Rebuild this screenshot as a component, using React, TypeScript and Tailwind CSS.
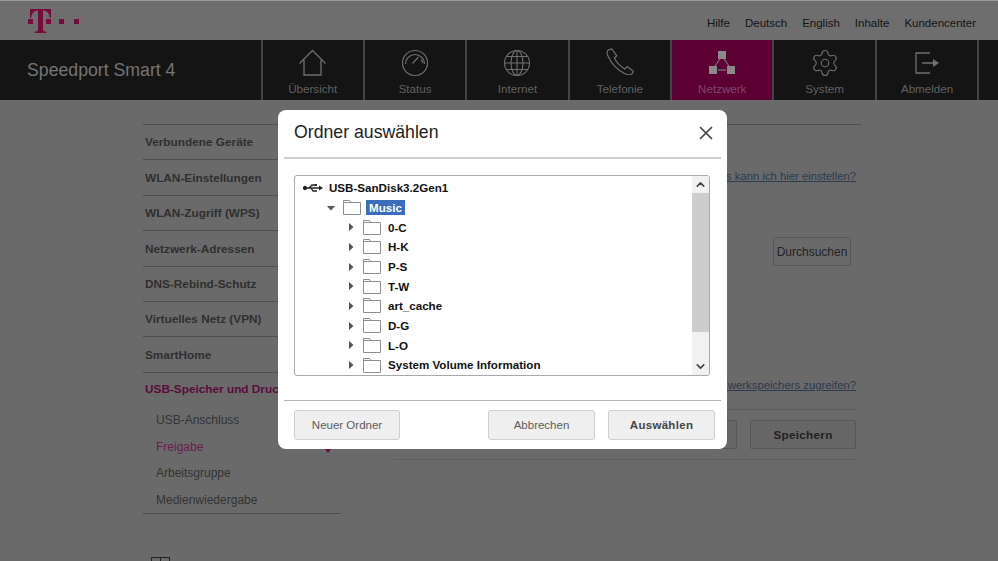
import { ChevronDown, ChevronUp, Settings, X } from 'lucide-react'

const topLinks = ['Hilfe', 'Deutsch', 'English', 'Inhalte', 'Kundencenter']

const sideItems = [
  'Verbundene Geräte',
  'WLAN-Einstellungen',
  'WLAN-Zugriff (WPS)',
  'Netzwerk-Adressen',
  'DNS-Rebind-Schutz',
  'Virtuelles Netz (VPN)',
  'SmartHome',
]

const subFolders = ['0-C', 'H-K', 'P-S', 'T-W', 'art_cache', 'D-G', 'L-O', 'System Volume Information']

function TelekomLogo() {
  return (
    <svg width="54" height="28" viewBox="0 0 54 28" fill="#7b0a3c">
      <path d="M1 2h23v9h-1.2c-.3-4-2-7.2-6.8-7.6V22c0 2 .8 2.6 3.4 2.7V26H7.600v-1.300c2.600-.100 3.400-.700 3.400-2.700V3.400C6.200 3.800 4.500 7 4.200 11H3V2z" />
      <rect x="1" y="12" width="5" height="5" />
      <rect x="19" y="12" width="5" height="5" />
      <rect x="32" y="12" width="5" height="5" />
      <rect x="47" y="12" width="5" height="5" />
    </svg>
  )
}

function HouseIcon() {
  return (
    <svg width="30" height="28" viewBox="0 0 30 28" fill="none" stroke="#6f6f6f" strokeWidth="1.300">
      <path d="M1.500 14.500 14.500 1.500l13 13M6 11v15h17V11" />
    </svg>
  )
}

function GaugeIcon() {
  return (
    <svg width="28" height="28" viewBox="0 0 28 28" fill="none" stroke="#6f6f6f" strokeWidth="1.200">
      <circle cx="14" cy="14" r="12.500" />
      <path d="M4.500 15a9.500 9.500 0 0 1 19 0" />
      <path d="M11.500 14.500l6-6.500M20 10.500l2 3.500" />
    </svg>
  )
}

function GlobeIcon() {
  return (
    <svg width="28" height="28" viewBox="0 0 28 28" fill="none" stroke="#6f6f6f" strokeWidth="1.100">
      <circle cx="14" cy="14" r="12.500" />
      <ellipse cx="14" cy="14" rx="6" ry="12.500" />
      <path d="M14 1.500v25M1.500 14h25M3.500 7.500h21M3.500 20.500h21" />
    </svg>
  )
}

function PhoneIcon() {
  return (
    <svg width="28" height="27" viewBox="0 0 28 27" fill="none" stroke="#6f6f6f" strokeWidth="1.200" className="mb-[2px]">
      <path d="M2.500 1.800 5.800 1l5 6.800L8.300 10c2 4 5.500 8 10.500 11l2.500-2.400 6 4.700-1 2c-1.300 1.500-4 2-6.800.7C11.500 22.500 5 15 1.500 7 .8 5 1.200 2.800 2.500 1.800z" />
    </svg>
  )
}

function NetworkIcon() {
  return (
    <svg width="28" height="25" viewBox="0 0 28 25" fill="#8a8a8a" stroke="none" className="mb-[2px]">
      <rect x="10" y="1" width="8" height="8" />
      <rect x="1" y="16" width="8" height="8" />
      <rect x="19" y="16" width="8" height="8" />
      <path d="M12 9 7 16M16 9l5 7M10 20h8" stroke="#8a8a8a" strokeWidth="1" fill="none" />
    </svg>
  )
}

function ExitIcon() {
  return (
    <svg width="25" height="22" viewBox="0 0 25 22" fill="none" stroke="#6f6f6f" strokeWidth="1.300" className="mb-[3px]">
      <path d="M15 1H1v20h14M7 11h12" />
      <path d="M18 7l6 4-6 4z" fill="#6f6f6f" stroke="none" />
    </svg>
  )
}

function UsbIcon() {
  return (
    <svg width="20" height="10" viewBox="0 0 20 10" fill="#222" stroke="#222" strokeWidth="1.300">
      <path d="M1 5h17M6 5l3-3h3M8 5l2 3h2" fill="none" />
      <circle cx="2" cy="5" r="1.500" />
      <path d="M16 2.500l4 2.500-4 2.500z" stroke="none" />
      <rect x="12" y="1" width="2" height="2" stroke="none" />
      <circle cx="13" cy="8" r="1" stroke="none" />
    </svg>
  )
}

function FolderIcon() {
  return (
    <svg width="18" height="15" viewBox="0 0 18 15" fill="#fff" stroke="#8e8e8e" strokeWidth="1" className="shrink-0">
      <path d="M.500 14.500V.500h6l1.500 2h9.500v12z" />
      <path d="M.500 2.500h7.500" fill="none" />
    </svg>
  )
}

function Caret({ open }: { open?: boolean }) {
  return (
    <svg width="8" height="8" viewBox="0 0 8 8" fill="#555" className="shrink-0">
      {open ? <path d="M0 2h8L4 6.500z" /> : <path d="M2 0l4.500 4L2 8z" />}
    </svg>
  )
}

function NavCell({ label, active, children }: { label: string; active?: boolean; children: React.ReactNode }) {
  return (
    <div className={`flex w-[102.400px] shrink-0 flex-col items-center border-l-2 border-[#444] ${active ? 'bg-[#5c0034]' : ''}`}>
      <div className="flex h-[37px] items-end justify-center">{children}</div>
      <span className={`mt-[5px] text-[11.600px] leading-[14px] ${active ? 'text-[#7c4b68]' : 'text-[#616161]'}`}>{label}</span>
    </div>
  )
}

function DarkButton({ label, bold }: { label?: string; bold?: boolean }) {
  return (
    <div className={`flex h-[29px] w-[106px] items-center justify-center rounded-[2px] border border-[#565656] bg-[#666] text-[11.700px] text-[#222] ${bold ? 'font-bold tracking-[0.3px]' : ''}`}>
      {label}
    </div>
  )
}

function DialogButton({ label, bold, className }: { label: string; bold?: boolean; className: string }) {
  return (
    <div className={`flex h-[30px] items-center justify-center rounded-[3px] border border-[#cfcfcf] bg-[#efefef] pt-[1px] text-[11.500px] ${bold ? 'font-bold tracking-[0.3px] text-[#444]' : 'text-[#5c5c5c]'} ${className}`}>
      {label}
    </div>
  )
}

export default function App() {
  return (
    <div className="relative h-[561px] w-[998px] overflow-hidden bg-[#6a6a6a] font-['Liberation_Sans',Arial,sans-serif]">
      <header className="flex h-10 items-center justify-between border-t border-[#9a9a9a] bg-[#6e6e6e] pl-[27px] pr-[22px]">
        <TelekomLogo />
        <div className="mt-[6px] flex gap-[15px] text-[11.500px] text-[#141414]">
          {topLinks.map((link) => (
            <span key={link}>{link}</span>
          ))}
        </div>
      </header>

      <nav className="flex h-[60px] bg-[#141414]">
        <div className="flex w-[260.500px] shrink-0 items-center pl-[27px] text-[17.700px] text-[#747474]">Speedport Smart 4</div>
        <NavCell label="Übersicht"><HouseIcon /></NavCell>
        <NavCell label="Status"><GaugeIcon /></NavCell>
        <NavCell label="Internet"><GlobeIcon /></NavCell>
        <NavCell label="Telefonie"><PhoneIcon /></NavCell>
        <NavCell label="Netzwerk" active><NetworkIcon /></NavCell>
        <NavCell label="System"><Settings size={30} strokeWidth={0.900} color="#6f6f6f" className="mb-[-1px]" /></NavCell>
        <NavCell label="Abmelden"><ExitIcon /></NavCell>
        <div className="flex-1 border-l-2 border-[#444]" />
      </nav>

      <main className="ml-[143px] mt-6 w-[718px]">
        <div className="flex border-t border-[#4d4d4d]">
          <aside className="w-[197px] shrink-0">
            {sideItems.map((item) => (
              <div key={item} className="flex h-[35.400px] items-center border-b border-[#4d4d4d] pl-[2px] pt-[2px] text-[11.800px] font-bold text-[#2f2f2f]">
                {item}
              </div>
            ))}
            <div className="border-b border-[#4d4d4d]">
              <div className="flex h-[34px] items-center pl-[2px] pt-[1px] text-[11.800px] font-bold whitespace-nowrap text-[#5a0a3a]">USB-Speicher und Drucker</div>
              <div className="pl-[13px] text-[12px] text-[#333]">
                <div className="flex h-[26.500px] items-center pt-[1px]">USB-Anschluss</div>
                <div className="flex h-[26.500px] items-center pt-[1px] text-[#6a1f4d]">Freigabe</div>
                <div className="flex h-[26.500px] items-center pt-[1px]">Arbeitsgruppe</div>
                <div className="flex h-[26.500px] items-center pt-[1px]">Medienwiedergabe</div>
              </div>
            </div>
            <div className="ml-[8px] mt-[43px] flex h-[20px] w-[19px] border border-[#222]">
              <div className="w-1/2 border-r border-[#222]" />
            </div>
          </aside>

          <section className="ml-[53px] flex flex-1 flex-col">
            <div className="mt-[43px] h-4 pr-[5px] text-right text-[11.300px] leading-4 text-[#2b3a4d] underline">Was kann ich hier einstellen?</div>
            <div className="mr-[10px] mt-[53px] flex h-[29px] w-[78px] items-center justify-center self-end rounded-[3px] border border-[#565656] text-[12px] text-[#222]">
              Durchsuchen
            </div>
            <div className="mt-[111px] h-4 pr-[5px] text-right text-[11.300px] leading-4 text-[#2b3a4d] underline">Wie kann ich auf die Inhalte des Netzwerkspeichers zugreifen?</div>
            <div className="mr-[5px] mt-[16px] flex justify-end gap-[13px] border-t border-b border-[#5d5d5d] py-[10px]">
              <DarkButton />
              <DarkButton label="Speichern" bold />
            </div>
          </section>
        </div>
      </main>

      {/* pink marker peeking out below the dialog */}
      <div className="absolute left-[325px] top-[449px] h-0 w-0 border-x-[3px] border-t-[4px] border-x-transparent border-t-[#6a0a3f]" />

      <div className="absolute left-[278px] top-[110px] flex h-[339px] w-[449px] flex-col rounded-[8px] bg-white px-[6px]">
        <div className="flex h-[49px] shrink-0 items-center justify-between border-b-2 border-[#cfcfcf] pb-[2px] pl-[10px] pr-[4px]">
          <h2 className="text-[17.700px] text-[#222]">Ordner auswählen</h2>
          <X size={22} strokeWidth={1.900} color="#444" />
        </div>

        <div className="ml-[10px] mt-[16px] flex h-[201px] w-[416px] shrink-0 overflow-hidden rounded-[3px] border border-[#a9a9a9]">
          <div className="flex-1 pt-[2px] text-[11.600px] font-bold text-[#111]">
            <div className="flex h-[19.700px] items-center pl-[8px]">
              <UsbIcon />
              <span className="ml-[6px]">USB-SanDisk3.2Gen1</span>
            </div>
            <div className="flex h-[19.700px] items-center pl-[32px]">
              <Caret open />
              <span className="ml-[8px]"><FolderIcon /></span>
              <span className="ml-[5px] bg-[#3a6dbd] px-[3px] leading-[15px] text-white">Music</span>
            </div>
            {subFolders.map((folder) => (
              <div key={folder} className="flex h-[19.700px] items-center pl-[52px]">
                <Caret />
                <span className="ml-[8px]"><FolderIcon /></span>
                <span className="ml-[7px]">{folder}</span>
              </div>
            ))}
          </div>
          <div className="flex w-[17px] shrink-0 flex-col bg-[#f1f1f1]">
            <div className="flex h-[17px] items-center justify-center"><ChevronUp size={13} strokeWidth={3} color="#444" /></div>
            <div className="h-[139px] bg-[#cdcdcd]" />
            <div className="flex-1" />
            <div className="flex h-[17px] items-center justify-center"><ChevronDown size={13} strokeWidth={3} color="#444" /></div>
          </div>
        </div>

        <div className="mt-[24px] flex items-start border-t border-[#b5b5b5] pl-[10px] pt-[9px]">
          <DialogButton label="Neuer Ordner" className="w-[106px]" />
          <DialogButton label="Abbrechen" className="ml-[88px] w-[107px]" />
          <DialogButton label="Auswählen" bold className="ml-[13px] w-[107px]" />
        </div>
      </div>
    </div>
  )
}
